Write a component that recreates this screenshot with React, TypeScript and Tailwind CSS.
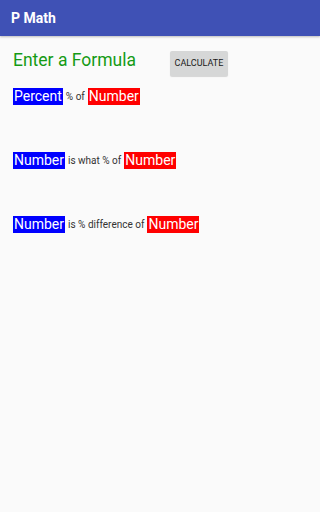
import React from "react";

const Box = ({ color, children }: { color: "blue" | "red"; children: React.ReactNode }) => (
  <span
    className={
      (color === "blue" ? "bg-[#0000ff]" : "bg-[#ff0000]") +
      " text-white text-[14px] leading-[17px] h-[17px] px-[1px] inline-flex items-center"
    }
  >
    {children}
  </span>
);

const Small = ({ children }: { children: React.ReactNode }) => (
  <span className="text-[10px] text-[#333333] mx-[3px] leading-[17px]">{children}</span>
);

export default function App() {
  return (
    <div className="w-full min-h-screen h-[512px] bg-[#fafafa] flex flex-col" style={{ fontFamily: "Roboto, sans-serif" }}>
      <div className="h-[36px] bg-[#3f51b5] flex items-center pl-[11px] shadow-[0_1px_2px_rgba(0,0,0,0.25)]">
        <span className="text-white text-[14px] font-bold">P Math</span>
      </div>
      <div className="flex items-start pt-[15px] pl-[13px]">
        <span className="text-[17.5px] leading-[20px] text-[#159a15] -mt-[1px]">Enter a Formula</span>
        <button className="ml-[34px] w-[58px] h-[25px] bg-[#d6d7d7] rounded-[2px] text-[9px] text-[#1a1a1a] flex items-center justify-center shadow-[0_1px_1px_rgba(0,0,0,0.15)]">
          CALCULATE
        </button>
      </div>
      <div className="flex flex-col pl-[13px] mt-[12px] gap-[47px]">
        <div className="flex items-center">
          <Box color="blue">Percent</Box>
          <Small>% of</Small>
          <Box color="red">Number</Box>
        </div>
        <div className="flex items-center">
          <Box color="blue">Number</Box>
          <Small>is what % of</Small>
          <Box color="red">Number</Box>
        </div>
        <div className="flex items-center">
          <Box color="blue">Number</Box>
          <Small>is % difference of</Small>
          <Box color="red">Number</Box>
        </div>
      </div>
    </div>
  );
}
